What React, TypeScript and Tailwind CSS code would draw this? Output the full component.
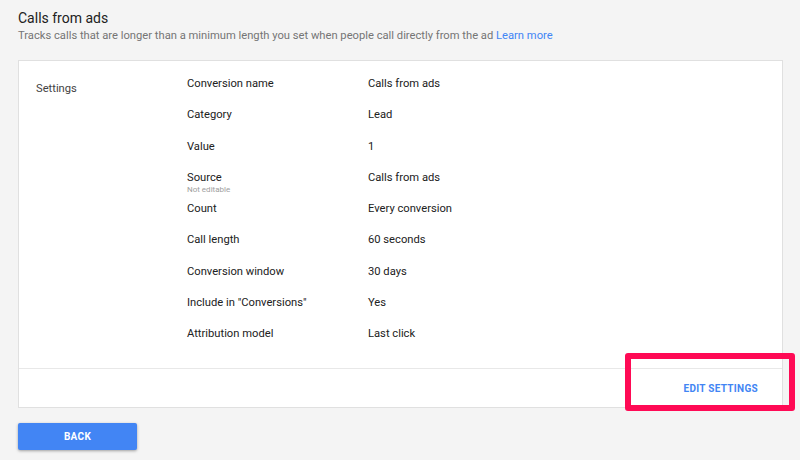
import React from 'react';

const rows: { label: string; value: string; note?: string }[] = [
  { label: 'Conversion name', value: 'Calls from ads' },
  { label: 'Category', value: 'Lead' },
  { label: 'Value', value: '1' },
  { label: 'Source', value: 'Calls from ads', note: 'Not editable' },
  { label: 'Count', value: 'Every conversion' },
  { label: 'Call length', value: '60 seconds' },
  { label: 'Conversion window', value: '30 days' },
  { label: 'Include in "Conversions"', value: 'Yes' },
  { label: 'Attribution model', value: 'Last click' },
];

export default function App() {
  return (
    <div
      className="relative w-[800px] h-[460px] bg-[#f4f4f4] text-[#212121] overflow-hidden px-[18px] pt-[9px]"
      style={{ fontFamily: 'Roboto, "Liberation Sans", sans-serif' }}
    >
      {/* Header */}
      <h1 className="text-[14px] leading-[19px] font-normal text-[#212121]">Calls from ads</h1>
      <p className="text-[11.2px] leading-[15px] text-[#757575]">
        Tracks calls that are longer than a minimum length you set when people call directly from the ad{' '}
        <span className="text-[#4285f4]">Learn more</span>
      </p>

      {/* Card */}
      <div className="mt-[17px] w-[765px] bg-white border border-[#e0e0e0]">
        <div className="flex pt-[15px] pb-[9px] h-[307px]">
          <div className="w-[168px] pl-[17px] pt-[5px] text-[11.2px] leading-[15px] text-[#424242]">Settings</div>
          <div className="flex flex-col">
            {rows.map((r) => (
              <div key={r.label} className="flex h-[31.3px] text-[11.2px] leading-[15px] text-[#212121]">
                <div className="w-[181px]">
                  <div>{r.label}</div>
                  {r.note && <div className="text-[8px] leading-[9px] text-[#9e9e9e]">{r.note}</div>}
                </div>
                <div>{r.value}</div>
              </div>
            ))}
          </div>
        </div>
        <div className="border-t border-[#e8e8e8] h-[39px] flex items-center justify-end pr-[24px]">
          <span className="text-[10px] font-bold tracking-[0.3px] text-[#4285f4]">EDIT SETTINGS</span>
        </div>
      </div>

      {/* Back button */}
      <button className="mt-[15px] w-[119px] h-[27px] rounded-[2px] bg-[#4285f4] text-white text-[10px] font-bold tracking-[0.3px] shadow-[0_1px_3px_rgba(0,0,0,0.35)]">
        BACK
      </button>

      {/* Annotation highlight */}
      <div className="absolute left-[625px] top-[353px] w-[170px] h-[58px] border-[6px] border-[#ff0a55] rounded-[3px]" />
    </div>
  );
}
